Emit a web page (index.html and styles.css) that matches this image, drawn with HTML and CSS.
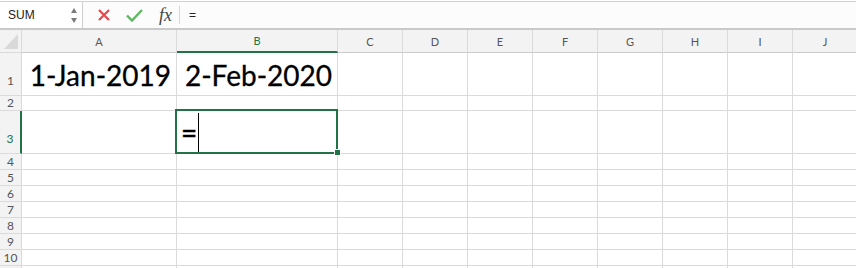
FILE: index.html
```html
<!DOCTYPE html>
<html>
<head>
    <title>Sheet - DATEDIF</title>
    <link rel="stylesheet" href="styles.css">
</head>
<body>
    <div class="formula-bar">
        <div class="name-box">
            <span>SUM</span>
            <span class="spinner"><i class="up"></i><i class="down"></i></span>
        </div>
        <div class="bar-buttons">
            <svg class="btn-cancel" width="12" height="12" viewBox="0 0 12 12"><path d="M1 1 L11 11 M11 1 L1 11" stroke="#e5484d" stroke-width="2.2" fill="none"/></svg>
            <svg class="btn-enter" width="17" height="13" viewBox="0 0 17 13"><path d="M1 6.5 L6 11.5 L16 1" stroke="#5fb760" stroke-width="2.4" fill="none"/></svg>
            <span class="btn-fx">fx</span>
        </div>
        <div class="formula-input">=</div>
    </div>

    <div class="sheet">
        <div class="corner"><i></i></div>
        <div class="col-head">A</div>
        <div class="col-head selected">B</div>
        <div class="col-head">C</div>
        <div class="col-head">D</div>
        <div class="col-head">E</div>
        <div class="col-head">F</div>
        <div class="col-head">G</div>
        <div class="col-head">H</div>
        <div class="col-head">I</div>
        <div class="col-head">J</div>

        <div class="row-head tall">1</div>
        <div class="cell date">1-Jan-2019</div>
        <div class="cell date">2-Feb-2020</div>
        <div class="cell"></div><div class="cell"></div><div class="cell"></div><div class="cell"></div>
        <div class="cell"></div><div class="cell"></div><div class="cell"></div><div class="cell"></div>

        <div class="row-head">2</div>
        <div class="cell"></div><div class="cell"></div><div class="cell"></div><div class="cell"></div><div class="cell"></div>
        <div class="cell"></div><div class="cell"></div><div class="cell"></div><div class="cell"></div><div class="cell"></div>

        <div class="row-head tall selected">3</div>
        <div class="cell"></div>
        <div class="cell editing"><span class="entry">=</span><span class="caret"></span><span class="fill-handle"></span></div>
        <div class="cell"></div><div class="cell"></div><div class="cell"></div><div class="cell"></div>
        <div class="cell"></div><div class="cell"></div><div class="cell"></div><div class="cell"></div>

        <div class="row-head">4</div>
        <div class="cell"></div><div class="cell"></div><div class="cell"></div><div class="cell"></div><div class="cell"></div>
        <div class="cell"></div><div class="cell"></div><div class="cell"></div><div class="cell"></div><div class="cell"></div>

        <div class="row-head">5</div>
        <div class="cell"></div><div class="cell"></div><div class="cell"></div><div class="cell"></div><div class="cell"></div>
        <div class="cell"></div><div class="cell"></div><div class="cell"></div><div class="cell"></div><div class="cell"></div>

        <div class="row-head">6</div>
        <div class="cell"></div><div class="cell"></div><div class="cell"></div><div class="cell"></div><div class="cell"></div>
        <div class="cell"></div><div class="cell"></div><div class="cell"></div><div class="cell"></div><div class="cell"></div>

        <div class="row-head">7</div>
        <div class="cell"></div><div class="cell"></div><div class="cell"></div><div class="cell"></div><div class="cell"></div>
        <div class="cell"></div><div class="cell"></div><div class="cell"></div><div class="cell"></div><div class="cell"></div>

        <div class="row-head">8</div>
        <div class="cell"></div><div class="cell"></div><div class="cell"></div><div class="cell"></div><div class="cell"></div>
        <div class="cell"></div><div class="cell"></div><div class="cell"></div><div class="cell"></div><div class="cell"></div>

        <div class="row-head">9</div>
        <div class="cell"></div><div class="cell"></div><div class="cell"></div><div class="cell"></div><div class="cell"></div>
        <div class="cell"></div><div class="cell"></div><div class="cell"></div><div class="cell"></div><div class="cell"></div>

        <div class="row-head">10</div>
        <div class="cell"></div><div class="cell"></div><div class="cell"></div><div class="cell"></div><div class="cell"></div>
        <div class="cell"></div><div class="cell"></div><div class="cell"></div><div class="cell"></div><div class="cell"></div>

        <div class="row-head"></div>
        <div class="cell"></div><div class="cell"></div><div class="cell"></div><div class="cell"></div><div class="cell"></div>
        <div class="cell"></div><div class="cell"></div><div class="cell"></div><div class="cell"></div><div class="cell"></div>
    </div>
</body>
</html>
```

FILE: styles.css
```css
body { margin: 0; background: #fff; font-family: "Liberation Sans", Arial, sans-serif; overflow: hidden; }

/* formula bar */
.formula-bar { display: flex; height: 26px; margin-top: 1px; border-top: 1px solid #d2d2d2; border-bottom: 2px solid #c9c9c9; background: #fcfcfc; }
.name-box { width: 83px; border-right: 1px solid #cfcfcf; background: #fff; display: flex; align-items: center; justify-content: space-between; padding: 0 5px 0 8px; box-sizing: border-box; font-size: 12px; color: #222; }
.spinner { display: flex; flex-direction: column; gap: 5px; }
.spinner i { display: block; width: 0; height: 0; border-left: 3.5px solid transparent; border-right: 3.5px solid transparent; }
.spinner .up { border-bottom: 5px solid #7b7b7b; }
.spinner .down { border-top: 5px solid #7b7b7b; }
.bar-buttons { display: flex; align-items: center; height: 100%; padding-left: 15px; }
.btn-cancel { margin-right: 16px; }
.btn-enter { margin-right: 16px; }
.btn-fx { font-family: "Liberation Serif", serif; font-style: italic; font-size: 18px; color: #444; padding-right: 7px; border-right: 1px solid #d6d6d6; line-height: 18px; }
.formula-input { display: flex; align-items: center; padding-left: 9px; font-size: 12px; color: #222; }

/* grid */
.sheet { display: grid; grid-template-columns: 22px 155px 161px repeat(8, 65px); grid-template-rows: 23px 43px 15px 43px repeat(8, 16px); }
.sheet > div { box-sizing: border-box; border-right: 1px solid #dadada; border-bottom: 1px solid #dadada; }
.corner { background: #f3f3f3; position: relative; }
.corner i { position: absolute; left: 4px; top: 4px; width: 14px; height: 15px; background: #d9d9d9; clip-path: polygon(100% 0, 100% 100%, 0 100%); }
.col-head { background: #f3f3f3; font-family: Lato, sans-serif; font-size: 11px; color: #555; display: flex; align-items: center; justify-content: center; border-bottom-color: #cacaca !important; }
.col-head.selected { color: #217346; border-bottom: 2px solid #217346 !important; }
.row-head { background: #f3f3f3; font-family: Lato, sans-serif; font-size: 12px; color: #555; display: flex; align-items: center; justify-content: center; line-height: 14px; }
.row-head.tall { padding-top: 14px; }
.row-head.selected { color: #217346; border-right: 2px solid #217346 !important; }

.cell { font-family: Lato, sans-serif; }
.cell.date { display: flex; align-items: flex-end; justify-content: flex-end; padding: 0 5px 6px 0; font-size: 28px; line-height: 28px; color: #000; -webkit-text-stroke: 0.3px #000; }
.cell.editing { position: relative; display: flex; align-items: center; padding-left: 4px; font-size: 28px; color: #000; -webkit-text-stroke: 0.4px #000; }
.cell.editing::after { content: ''; position: absolute; left: -2px; top: -2px; right: -1px; bottom: -1px; border: 2px solid #217346; }
.caret { align-self: stretch; margin: 2px 0 1px 1px; border-left: 1px solid #000; }
.fill-handle { position: absolute; right: -3px; bottom: -2px; width: 5px; height: 5px; background: #217346; box-shadow: 0 0 0 1px #fff; z-index: 1; }
```
